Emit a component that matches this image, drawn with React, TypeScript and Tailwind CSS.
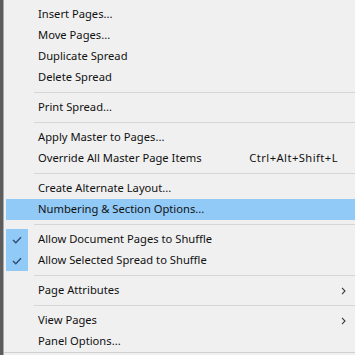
const font = { fontFamily: '"Noto Sans", "Segoe UI", sans-serif' };

type Item = {
  label?: string;
  shortcut?: string;
  checked?: boolean;
  sub?: boolean;
  active?: boolean;
  sep?: boolean;
};

const items: Item[] = [
  { label: "Insert Pages..." },
  { label: "Move Pages..." },
  { label: "Duplicate Spread" },
  { label: "Delete Spread" },
  { sep: true },
  { label: "Print Spread..." },
  { sep: true },
  { label: "Apply Master to Pages..." },
  { label: "Override All Master Page Items", shortcut: "Ctrl+Alt+Shift+L" },
  { sep: true },
  { label: "Create Alternate Layout..." },
  { label: "Numbering & Section Options...", active: true },
  { sep: true },
  { label: "Allow Document Pages to Shuffle", checked: true },
  { label: "Allow Selected Spread to Shuffle", checked: true },
  { sep: true },
  { label: "Page Attributes", sub: true },
  { sep: true },
  { label: "View Pages", sub: true },
  { label: "Panel Options..." },
];

const Check = () => (
  <svg width="10" height="8" viewBox="0 0 10 8">
    <path d="M1 4 L3.8 6.8 L9 1.2" fill="none" stroke="#2d4f73" strokeWidth="1.4" />
  </svg>
);

const Chevron = () => (
  <svg width="5" height="8" viewBox="0 0 5 8">
    <path d="M1 0.8 L4 4 L1 7.2" fill="none" stroke="#3a3a3a" strokeWidth="1.1" />
  </svg>
);

const App = () => {
  return (
    <div className="flex w-[355px] h-[355px] bg-[#f0f0f0] overflow-hidden" style={font}>
      <div className="w-[3px] bg-[#5c5c5c]" />
      <div className="w-[1px] bg-[#a8a8a8]" />
      <div className="flex-1 flex flex-col pt-[4px] pl-[2px]">
        {items.map((it, i) =>
          it.sep ? (
            <div key={i} className="h-[9px] flex items-center pl-[28px]">
              <div className="h-px w-full bg-[#d6d6d6]" />
            </div>
          ) : (
            <div
              key={i}
              className={`h-[21px] flex items-center text-[11.2px] text-[#111] ${
                it.active ? "bg-[#91c9f7]" : ""
              }`}
            >
              <div
                className={`w-[22px] h-full flex items-center justify-center ${
                  it.checked ? "bg-[#91c9f7]" : ""
                }`}
              >
                {it.checked && <Check />}
              </div>
              <span className="ml-[10px] flex-1 whitespace-nowrap">{it.label}</span>
              {it.shortcut && (
                <span className="mr-[17px] whitespace-nowrap tracking-[0.45px]">{it.shortcut}</span>
              )}
              {it.sub && (
                <span className="mr-[9px] flex items-center">
                  <Chevron />
                </span>
              )}
            </div>
          )
        )}
        <div className="h-px bg-[#d0d0d0] -ml-[2px]" />
      </div>
    </div>
  );
};

export default App;
